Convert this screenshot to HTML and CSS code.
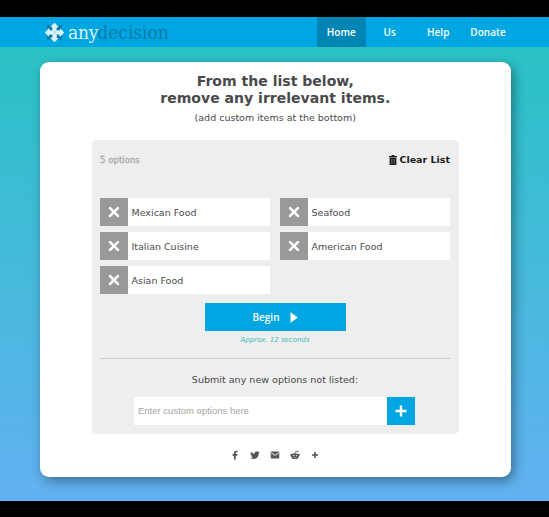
FILE: index.html
```html
<!DOCTYPE html>
<html lang="en">
<head>
<meta charset="utf-8">
<title>anydecision</title>
<link rel="stylesheet" href="styles.css">
</head>
<body>
<svg class="defs" width="0" height="0">
  <symbol id="cross" viewBox="0 0 12 12"><path d="M2.1 2.1l7.8 7.8M9.9 2.1l-7.8 7.8" stroke="#fff" stroke-width="2.7" stroke-linecap="round"/></symbol>
</svg>
<header class="bar">
  <div class="logo">
    <svg class="mark" viewBox="0 0 20 20">
      <path d="M3 3h5.500l1.500 6 1.500-6H17v5.500l-6 1.500 6 1.500V17h-5.500l-1.500-6-1.500 6H3v-5.500l6-1.500-6-1.500z" fill="#087ba8"/>
      <g fill="#d9f3fd">
        <path id="arrow" d="M10 .8L14.200 4.800 12.300 5.300 11.500 8.500 10 10 7.600 7.800 8 5 6 4.500Z"/>
        <use href="#arrow" transform="rotate(90 10 10)"/>
        <use href="#arrow" transform="rotate(180 10 10)"/>
        <use href="#arrow" transform="rotate(270 10 10)"/>
      </g>
    </svg>
    <span class="any">any</span><span class="decision">decision</span>
  </div>
  <nav class="nav">
    <a class="active">Home</a><a>Us</a><a>Help</a><a>Donate</a>
  </nav>
</header>
<main class="stage">
  <section class="card">
    <h1>From the list below,<br>remove any irrelevant items.</h1>
    <p class="sub">(add custom items at the bottom)</p>
    <div class="panel">
      <div class="tools">
        <span class="count">5 options</span>
        <span class="clear"><svg class="trash" viewBox="0 0 8 10"><path d="M2.6 0h2.8v1H8v1.3H0V1h2.600zM.6 2.800h6.800V10H.6z" fill="#1c1c1c"/><path d="M2.500 4v4.800M4 4v4.800M5.500 4v4.800" stroke="#777" stroke-width=".6"/></svg>Clear List</span>
      </div>
      <div class="items">
        <div class="item"><span class="x"><svg><use href="#cross"/></svg></span>Mexican Food</div>
        <div class="item"><span class="x"><svg><use href="#cross"/></svg></span>Seafood</div>
        <div class="item"><span class="x"><svg><use href="#cross"/></svg></span>Italian Cuisine</div>
        <div class="item"><span class="x"><svg><use href="#cross"/></svg></span>American Food</div>
        <div class="item"><span class="x"><svg><use href="#cross"/></svg></span>Asian Food</div>
      </div>
      <div class="begin">Begin<svg viewBox="0 0 8 11"><path d="M.5.300L7.800 5.500.5 10.700z" fill="#fff"/></svg></div>
      <p class="approx">Approx. 12 seconds</p>
      <hr>
      <p class="submit">Submit any new options not listed:</p>
      <div class="entry"><span class="field">Enter custom options here</span><span class="add"><svg viewBox="0 0 12 12"><path d="M6 .5v11M.5 6h11" stroke="#fff" stroke-width="2.400"/></svg></span></div>
    </div>
    <div class="share">
      <svg viewBox="0 0 10 10"><path d="M4 9.500V5.700H2.500V4.100H4V2.900C4 1.400 4.900.7 6.200.7h1.300v1.600h-.9c-.6 0-.8.300-.8.800v1h1.700l-.3 1.600H5.800v3.800z"/></svg>
      <svg viewBox="0 0 10 10"><path d="M.8 1.800c1 1.200 2.300 1.800 3.900 1.900C4.500 2.200 5.500 1.300 6.700 1.300c.6 0 1.100.2 1.500.6l1.300-.5-.9 1.200 1-.2-.9 1C8.600 7 6.400 9 3.600 9 2.400 9 1.300 8.700.4 8.100c1.100.1 2-.2 2.700-.8-.9-.1-1.500-.6-1.800-1.400h.8C1.200 5.600.6 4.900.6 4l.8.2C.600 3.500.4 2.700.8 1.800z"/></svg>
      <svg viewBox="0 0 10 10"><rect x=".7" y="1.400" width="8.600" height="7.200" rx=".8"/><path d="M1 2.700l4 2.600 4-2.600" stroke="#fff" stroke-width=".9" fill="none"/></svg>
      <svg viewBox="0 0 10 10"><ellipse cx="5" cy="6.200" rx="3.800" ry="2.900"/><circle cx="1.300" cy="4.800" r="1.100"/><circle cx="8.700" cy="4.800" r="1.100"/><path d="M5 3.500l.5-2.300 2 .4" stroke="#555" stroke-width=".6" fill="none"/><circle cx="7.700" cy="1.500" r=".8"/><circle cx="3.600" cy="5.600" r=".7" fill="#fff"/><circle cx="6.400" cy="5.600" r=".7" fill="#fff"/><path d="M3.500 7.300q1.500 1 3 0" stroke="#fff" stroke-width=".5" fill="none"/></svg>
      <svg viewBox="0 0 10 10"><path d="M4.200 2h1.600v2.200H8v1.600H5.800V8H4.200V5.800H2V4.200h2.200z"/></svg>
    </div>
  </section>
</main>
</body>
</html>
```

FILE: styles.css
```css
* { box-sizing: border-box; }
body {
  margin: 0;
  height: 517px;
  padding: 17px 0 16px;
  background: #000;
  overflow: hidden;
  display: flex;
  flex-direction: column;
  font-family: "DejaVu Sans", sans-serif;
  font-size: 9.500px;
  color: #4a4a4a;
}
svg { display: block; flex: none; }
.defs { position: absolute; }
p, h1 { margin: 0; text-align: center; }
.bar {
  height: 30px;
  flex: none;
  display: flex;
  justify-content: space-between;
  padding: 0 36.500px 0 44px;
  background: #00a6e2;
}
.logo {
  display: flex;
  align-items: center;
  font-family: "DejaVu Serif Condensed", "DejaVu Serif", serif;
  font-stretch: condensed;
  font-size: 19px;
  line-height: 26px;
}
.mark { width: 21px; height: 21px; margin: 0 3px 0 0; }
.any { color: #d9f3fd; letter-spacing: -0.200px; }
.decision { color: #087ba8; letter-spacing: 0; margin-left: -1px; }
.nav {
  display: flex;
  font: 600 10px/30px "Open Sans", sans-serif;
  color: #fff;
}
.nav a { width: 48.500px; text-align: center; }
.nav .active { background: #0084b3; }
.nav a:last-child { width: 49px; margin-left: 1px; }
.stage {
  flex: 1;
  padding: 15px 38.500px 24px 40px;
  background: linear-gradient(#2ac2c6, #62b1f1);
  overflow: hidden;
}
.card {
  height: 415px;
  padding: 11px 52px 0;
  border-radius: 9px;
  background: #fff;
  box-shadow: 3px 4px 12px rgba(0, 0, 0, .38);
}
h1 { font-size: 14.050px; line-height: 17px; }
.sub { margin-top: 4px; line-height: 14px; }
.panel {
  height: 294px;
  margin: 15px 0 0;
  width: 367px;
  padding: 13px 9px 0 8px;
  border-radius: 5px;
  background: #eee;
}
.tools { display: flex; justify-content: space-between; line-height: 14px; }
.count { font-size: 8.600px; color: #aaa; -webkit-text-stroke: .3px #aaa; }
.clear { display: flex; align-items: center; gap: 2px; font-weight: bold; color: #1c1c1c; }
.trash { width: 8px; height: 10px; }
.items {
  margin-top: 31px;
  display: grid;
  grid-template-columns: 170px 170px;
  column-gap: 10px;
  row-gap: 6px;
}
.item { height: 28px; display: flex; align-items: center; gap: 3.500px; background: #fff; }
.x { width: 28px; height: 28px; display: grid; place-items: center; background: #999; }
.x svg { width: 12px; height: 12px; }
.begin {
  width: 141px;
  height: 28px;
  margin: 9px auto 0;
  display: flex;
  align-items: center;
  justify-content: center;
  gap: 10px;
  background: #00a6e2;
  color: #fff;
  font: 600 10px "Open Sans", sans-serif;
}
.begin svg { width: 8px; height: 11px; }
.approx { margin-top: 4px; font-size: 7px; line-height: 10px; font-style: italic; color: #3cbcb8; }
hr { margin: 13px 0 0; border: 0; border-top: 1px solid #c8c8c8; }
.submit { margin-top: 14px; line-height: 14px; font-size: 9.550px; }
.entry { display: flex; width: 281px; margin: 10px 0 0 34px; }
.field {
  flex: 1;
  height: 28px;
  padding-left: 4px;
  background: #fff;
  font: 9.500px/28px "Liberation Sans", sans-serif;
  color: #a3a3a3;
}
.add { width: 28px; height: 28px; display: grid; place-items: center; background: #00a6e2; }
.add svg { width: 12px; height: 12px; }
.share { display: flex; justify-content: center; gap: 10px; margin-top: 16px; }
.share svg { width: 10px; height: 10px; fill: #555; }
```
